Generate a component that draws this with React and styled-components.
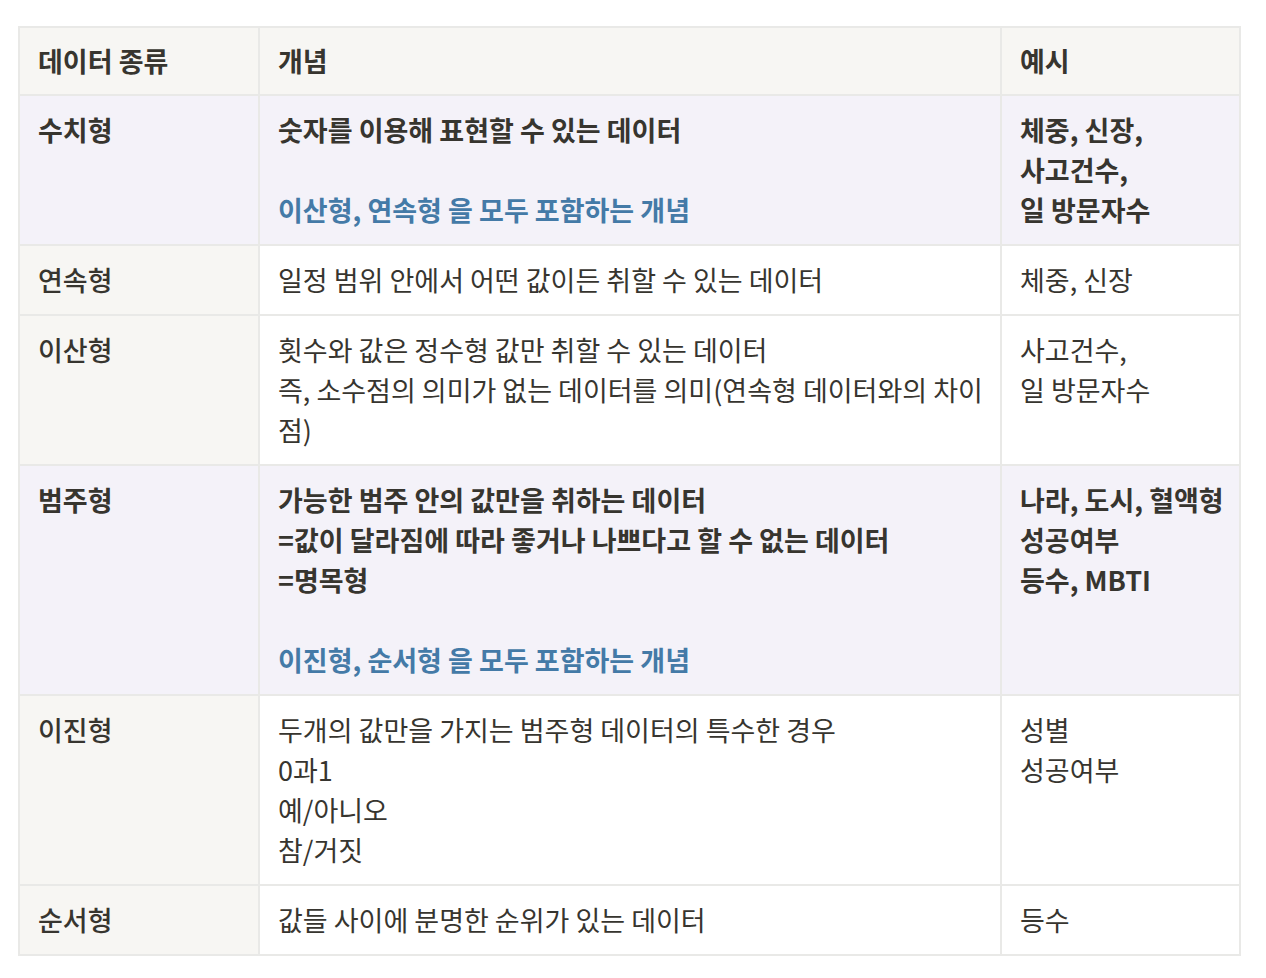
import React from 'react';
import styled, { createGlobalStyle } from 'styled-components';

const GlobalStyle = createGlobalStyle`
  body {
    margin: 0;
    background: #ffffff;
    font-family: "Noto Sans CJK KR", "Noto Sans", sans-serif;
    color: #37352f;
  }
`;

const Page = styled.div`
  padding: 26px 0 0 18px;
`;

const Table = styled.div`
  display: grid;
  grid-template-columns: 240px 742px 239px;
  width: 1223px;
  box-sizing: border-box;
  border-top: 2px solid #e9e9e7;
  border-left: 2px solid #e9e9e7;
`;

const Cell = styled.div`
  box-sizing: border-box;
  border-right: 2px solid #e9e9e7;
  border-bottom: 2px solid #e9e9e7;
  padding: ${p => (p.$head ? '13px 10px 13px 18px' : '14px 10px 14px 18px')};
  font-size: 27px;
  line-height: 40px;
  background: ${p => (p.$purple ? '#f4f2f9' : p.$head || p.$first ? '#f7f6f3' : '#ffffff')};
  font-weight: ${p => (p.$bold || p.$head ? 600 : p.$first ? 500 : 400)};
  color: #37352f;
`;

const Line = styled.div`
  min-height: 40px;
  white-space: nowrap;
`;

const Blue = styled.span`
  color: #447aa7;
`;

const rows = [
  {
    kind: '수치형',
    purple: true,
    bold: true,
    concept: ['숫자를 이용해 표현할 수 있는 데이터', '', <Blue key="b">이산형, 연속형 을 모두 포함하는 개념</Blue>],
    example: ['체중, 신장,', '사고건수,', '일 방문자수'],
  },
  {
    kind: '연속형',
    concept: ['일정 범위 안에서 어떤 값이든 취할 수 있는 데이터'],
    example: ['체중, 신장'],
  },
  {
    kind: '이산형',
    concept: ['횟수와 값은 정수형 값만 취할 수 있는 데이터', '즉, 소수점의 의미가 없는 데이터를 의미(연속형 데이터와의 차이', '점)'],
    example: ['사고건수,', '일 방문자수'],
  },
  {
    kind: '범주형',
    purple: true,
    bold: true,
    concept: [
      '가능한 범주 안의 값만을 취하는 데이터',
      '=값이 달라짐에 따라 좋거나 나쁘다고 할 수 없는 데이터',
      '=명목형',
      '',
      <Blue key="b">이진형, 순서형 을 모두 포함하는 개념</Blue>,
    ],
    example: ['나라, 도시, 혈액형', '성공여부', '등수, MBTI'],
  },
  {
    kind: '이진형',
    concept: ['두개의 값만을 가지는 범주형 데이터의 특수한 경우', '0과1', '예/아니오', '참/거짓'],
    example: ['성별', '성공여부'],
  },
  {
    kind: '순서형',
    concept: ['값들 사이에 분명한 순위가 있는 데이터'],
    example: ['등수'],
  },
];

function Lines({ items }) {
  return items.map((t, i) => <Line key={i}>{t}</Line>);
}

export default function App() {
  return (
    <Page>
      <GlobalStyle />
      <Table>
        <Cell $head>데이터 종류</Cell>
        <Cell $head>개념</Cell>
        <Cell $head>예시</Cell>
        {rows.map(r => (
          <React.Fragment key={r.kind}>
            <Cell $first $purple={r.purple} $bold={r.bold}>{r.kind}</Cell>
            <Cell $purple={r.purple} $bold={r.bold}>
              <Lines items={r.concept} />
            </Cell>
            <Cell $purple={r.purple} $bold={r.bold}>
              <Lines items={r.example} />
            </Cell>
          </React.Fragment>
        ))}
      </Table>
    </Page>
  );
}
